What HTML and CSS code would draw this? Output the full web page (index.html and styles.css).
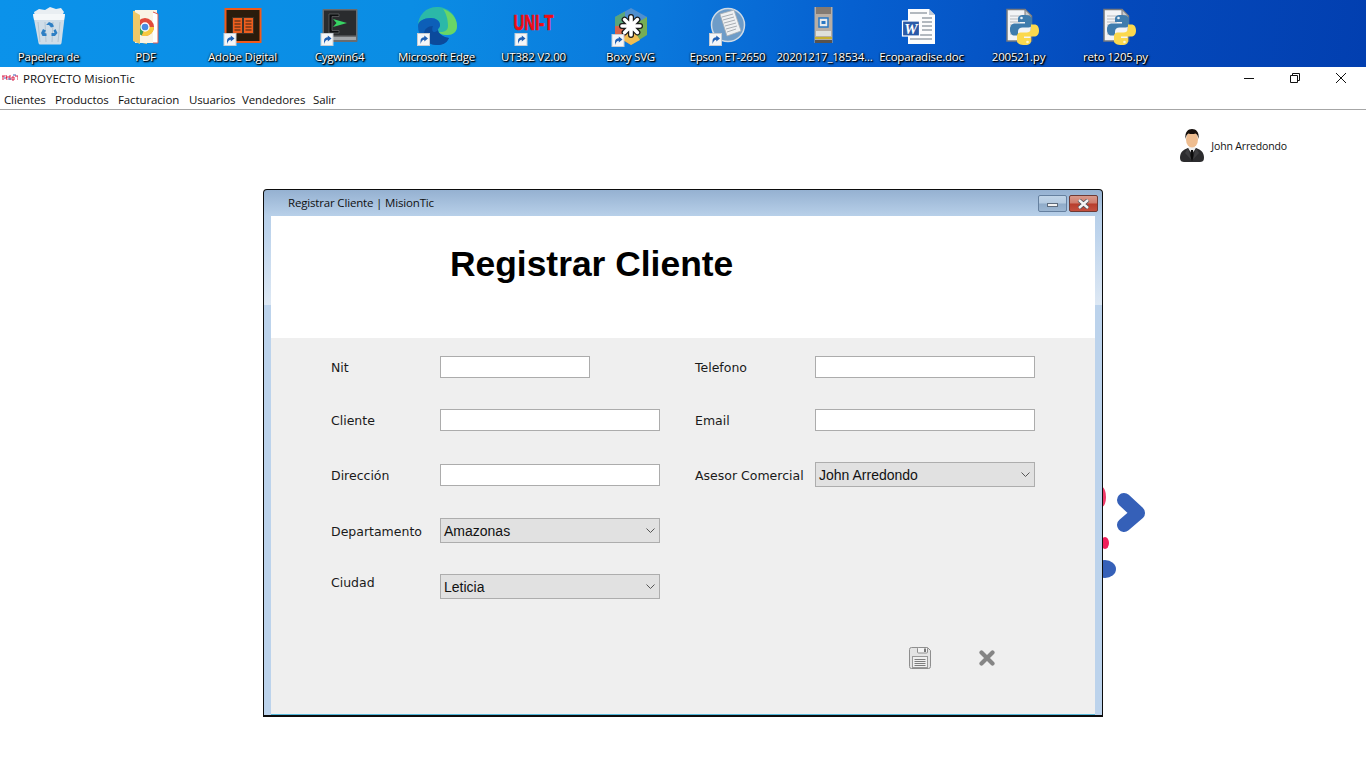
FILE: index.html
```html
<!DOCTYPE html>
<html lang="es">
<head>
<meta charset="utf-8">
<title>PROYECTO MisionTic</title>
<link rel="stylesheet" href="styles.css">
</head>
<body>
<svg class="defs" width="0" height="0" aria-hidden="true">
  <defs>
    <symbol id="shortcut" viewBox="0 0 13 13">
      <rect width="13" height="13" fill="#f4f6f8"/>
      <rect x=".5" y=".5" width="12" height="12" fill="none" stroke="#c8ccd2"/>
      <path d="M3.5 11V8c0-2.6 1.6-3.8 3.8-3.8V2.4L11 5.6 7.3 8.6V6.8C5.6 6.8 4.6 8 3.5 11z" fill="#1f5fb4"/>
    </symbol>
    <symbol id="pydoc" viewBox="0 0 48 44">
      <path d="M12 5.500H30L36.500 12V37H12z" fill="#f3f4f6" stroke="#77797d" stroke-width="1.500"/>
      <path d="M30 5.500V12H36.500z" fill="#c8cacd" stroke="#77797d"/>
      <path d="M15 12h12M15 15h12M15 18h10M15 21h7M15 24h6M15 27h6M15 30h7" stroke="#b8babd" stroke-width="1.200"/>
      <path d="M29 11c-5 0-6 2-6 4v3h7v1.500H20c-3 0-5 2-5 6s2 6 4.500 6H23v-4c0-2.500 2-4 4.500-4h6c2 0 3.500-1.500 3.500-3.500V15c0-2.500-3-4-8-4z" fill="#3f7cad"/>
      <path d="M30 41c5 0 6-2 6-4v-3h-7v-1.500h10c3 0 5-2 5-6s-2-6-4.500-6H36v4c0 2.500-2 4-4.500 4h-6c-2 0-3.500 1.500-3.500 3.500V37c0 2.500 3 4 8 4z" fill="#fbd84e"/>
      <circle cx="26.500" cy="14" r="1.300" fill="#e8f0f6"/>
      <circle cx="32.500" cy="38" r="1.300" fill="#fff7d0"/>
    </symbol>
  </defs>
</svg>

<header class="desktop">
  <div class="shortcut-item">
    <svg class="desk-icon" viewBox="0 0 48 44">
      <path d="M9 8l5-3 6 1 5-3 6 2 5-1 3 4-2 4H10z" fill="#e9eef2"/>
      <path d="M8 10h32l-3.500 29c-.3 1.200-1 1.500-2 1.500h-19c-1 0-1.700-.3-2-1.500z" fill="#cfdde8"/>
      <path d="M8 10h32l-1 6H9z" fill="#f4f7f9"/>
      <path d="M13 18l2 20M20 18l1 20M28 18l-1 20M35 18l-2 20" stroke="#b3c5d3" stroke-width="1"/>
      <path d="M21 21l3-3 3.500 1.500 1.500 3-3 1-2-2.500zM30.500 25l2 4-2.500 3h-3.500v-3h3l-1-2.500zM21.500 32h-4l-1.500-3 2-4 3 1.500-1.500 2.500 2 .5z" fill="#2e7fc4"/>
    </svg>
    <span class="desk-label">Papelera de</span>
  </div>
  <div class="shortcut-item">
    <svg class="desk-icon" viewBox="0 0 48 44">
      <path d="M11 7l14-1v34l-14-3z" fill="#f2cd72"/>
      <path d="M13 6h22v33H13z" fill="#faf4e4"/>
      <path d="M31 8l5 2v29h-5" fill="#fff" stroke="#dc5a50" stroke-width="1"/>
      <circle cx="23" cy="23" r="9" fill="#e24a3b"/>
      <path d="M23 23l9 0a9 9 0 0 1-12.300 8.400z" fill="#f7c93e"/>
      <path d="M23 23l-3.300 8.400A9 9 0 0 1 14.500 19z" fill="#3aa457"/>
      <circle cx="23" cy="23" r="4" fill="#4a8ae0" stroke="#fff" stroke-width="1.300"/>
      <path d="M11 7l7 4v29l-7-3z" fill="#f0c868"/>
    </svg>
    <span class="desk-label">PDF</span>
  </div>
  <div class="shortcut-item">
    <svg class="desk-icon" viewBox="0 0 48 44">
      <rect x="6.500" y="5" width="35" height="33" fill="#2a1c0c" stroke="#f05a1a" stroke-width="2"/>
      <rect x="13" y="13" width="22" height="17" fill="#3f3226"/>
      <path d="M14 14h9v15h-9zM25 14h9v15h-9z" fill="#ee5e1e"/>
      <path d="M15.500 17h6M15.500 20h6M15.500 23h6M15.500 26h6M26.500 17h6M26.500 20h6M26.500 23h6M26.500 26h6" stroke="#3a2412" stroke-width="1"/>
      <use href="#shortcut" x="4.500" y="29" width="13" height="13"/>
    </svg>
    <span class="desk-label">Adobe Digital</span>
  </div>
  <div class="shortcut-item">
    <svg class="desk-icon" viewBox="0 0 48 44">
      <rect x="6.500" y="5" width="35" height="33" rx="1" fill="#6a6c6e"/>
      <rect x="8" y="6.500" width="32" height="25" fill="#2a2c2e"/>
      <path d="M13 10h10v2.500h-7v14h7V29H13z" fill="#0c0e10" stroke="#686a6c" stroke-width=".7"/>
      <path d="M17 15l14 4-14 4 3.500-4z" fill="#37d463"/>
      <path d="M8 33h32v3H8z" fill="#a2a6a9"/>
      <use href="#shortcut" x="4.500" y="29" width="13" height="13"/>
    </svg>
    <span class="desk-label">Cygwin64</span>
  </div>
  <div class="shortcut-item">
    <svg class="desk-icon" viewBox="0 0 48 44">
      <path d="M5 22C5 11 13 3 24 3c11 0 20 8 20 19 0 6-4 9-10 9-5 0-9-2-9-5 0-2 2-2 2-5 0-4-4-7-9-7-7 0-13 3-13 8z" fill="#2bb8a8"/>
      <path d="M30 5c8 2 14 9 14 17 0 6-4 9-10 9-4 0-7-1-8-3 3 0 9 0 9-6 0-7-2-13-5-17z" fill="#69d666"/>
      <path d="M5 22c0-5 6-8 13-8 5 0 9 3 9 7 0 3-2 3-2 5 0 3 4 7 11 8-3 6-7 7-12 7C13 41 5 33 5 22z" fill="#0d5fb8"/>
      <path d="M25 26c0 3 4 7 11 8-3 6-7 7-12 7-7 0-13-4-13-11 0-5 4-8 9-8-2 4 0 9 5 4z" fill="#0b4a9c"/>
      <use href="#shortcut" x="4" y="29" width="13" height="13"/>
    </svg>
    <span class="desk-label">Microsoft Edge</span>
  </div>
  <div class="shortcut-item">
    <svg class="desk-icon" viewBox="0 0 48 44">
      <text class="unit-logo" transform="translate(23.500 26) scale(1 1.450)">UNI-T</text>
      <use href="#shortcut" x="4.500" y="29" width="13" height="13"/>
    </svg>
    <span class="desk-label">UT382 V2.00</span>
  </div>
  <div class="shortcut-item">
    <svg class="desk-icon" viewBox="0 0 48 44">
      <path d="M24 4l16 9v9H8v-9z" fill="#4f8fd0"/>
      <path d="M8 13l10-5.500v14.500H8z" fill="#5aa57a"/>
      <path d="M8 22v9l16 10V22z" fill="#d9644a"/>
      <path d="M40 13v18L24 41V22z" fill="#76ad55"/>
      <path d="M24 41l-8-5 8-14 9 14z" fill="#f0bd52"/>
      <g stroke="#1a1a1a" stroke-width="6" stroke-linecap="round"><path d="M24 13v18M15 22h18M17.600 15.600l12.800 12.800M30.400 15.600L17.600 28.400"/></g>
      <g stroke="#fff" stroke-width="3.600" stroke-linecap="round"><path d="M24 13v18M15 22h18M17.600 15.600l12.800 12.800M30.400 15.600L17.600 28.400"/></g>
      <use href="#shortcut" x="4.500" y="30" width="13" height="13"/>
    </svg>
    <span class="desk-label">Boxy SVG</span>
  </div>
  <div class="shortcut-item">
    <svg class="desk-icon" viewBox="0 0 48 44">
      <circle cx="24" cy="21" r="16.500" fill="#6e9cc8" stroke="#cfdbe6" stroke-width="1.500"/>
      <path d="M16 10l14-4 7 21-14 5z" fill="#eef0f2" stroke="#a8aeb4" stroke-width=".8"/>
      <path d="M18 13l11-3M19 16l11-3M20 19l11-3M21 22l11-3M22 25l11-3M23 28l9-3" stroke="#a8aeb4"/>
      <use href="#shortcut" x="5" y="29" width="13" height="13"/>
    </svg>
    <span class="desk-label">Epson ET-2650</span>
  </div>
  <div class="shortcut-item">
    <svg class="desk-icon" viewBox="0 0 48 44">
      <rect x="13.500" y="3" width="18" height="36" fill="#b8aea4"/>
      <rect x="15" y="3" width="15" height="7" fill="#837a72"/>
      <rect x="18" y="14" width="9" height="9" fill="#e8eaec" stroke="#2a78c4" stroke-width="1.500"/>
      <rect x="20.500" y="17" width="4" height="3" fill="#2a78c4"/>
      <path d="M15 27h15v5H15z" fill="#dfe0dc"/>
      <path d="M14 33h17v2H14z" fill="#c8b030"/>
      <path d="M14 36h17v3H14z" fill="#5a534d"/>
    </svg>
    <span class="desk-label">20201217_18534...</span>
  </div>
  <div class="shortcut-item">
    <svg class="desk-icon" viewBox="0 0 48 44">
      <path d="M10 5h21l6 6v29H10z" fill="#fdfdfd"/>
      <path d="M31 5v6h6z" fill="#c4ccd6"/>
      <path d="M12 9h17M24 14h10M24 18h10M24 22h10M24 26h10M12 31h22M12 35h22" stroke="#9aa2ab" stroke-width="1.500"/>
      <rect x="4.500" y="17" width="17" height="15" fill="#2a5aa8" stroke="#fff" stroke-width="1.200"/>
      <text class="word-logo" x="13" y="29.500">W</text>
    </svg>
    <span class="desk-label">Ecoparadise.doc</span>
  </div>
  <div class="shortcut-item">
    <svg class="desk-icon" viewBox="0 0 48 44"><use href="#pydoc" width="48" height="44"/></svg>
    <span class="desk-label">200521.py</span>
  </div>
  <div class="shortcut-item">
    <svg class="desk-icon" viewBox="0 0 48 44"><use href="#pydoc" width="48" height="44"/></svg>
    <span class="desk-label">reto 1205.py</span>
  </div>
</header>

<div class="app-title">
  <div class="app-name">
    <svg class="app-icon" viewBox="0 0 16 8">
      <path d="M0 2h3M1 2v4M4 1l1 5M5 3h3M8 1v5M10 3h2v3h-2zM13 2h3v4" stroke="#d81e48" stroke-width="1" fill="none"/>
      <path d="M2 4h2M6 5h3M11 1h3" stroke="#3f5fb8" stroke-width="1"/>
    </svg>
    <span>PROYECTO MisionTic</span>
  </div>
  <div class="win-controls">
    <span class="win-btn"><svg width="10" height="10" viewBox="0 0 10 10"><path d="M0 5.500h10" stroke="#111"/></svg></span>
    <span class="win-btn"><svg width="10" height="10" viewBox="0 0 10 10" fill="none" stroke="#111"><path d="M.5 2.500h7v7h-7zM2.500 2.500v-2h7v7h-2"/></svg></span>
    <span class="win-btn"><svg width="10" height="10" viewBox="0 0 10 10"><path d="M0 0l10 10M10 0L0 10" stroke="#111"/></svg></span>
  </div>
</div>

<nav class="menu">
  <span>Clientes</span><span>Productos</span><span>Facturacion</span><span>Usuarios</span><span>Vendedores</span><span>Salir</span>
</nav>

<main class="workspace">
  <div class="user">
    <svg class="avatar" viewBox="0 0 24 33">
      <path d="M0 29c0-6 3-8 8-10h8c5 2 8 4 8 10 0 3-2 4-4 4H4c-2 0-4-1-4-4z" fill="#2c2c2e"/>
      <path d="M8 19l4 6 4-6-1.500-2h-5z" fill="#f0f0f0"/>
      <path d="M11 21h2l.8 8-1.800 3-1.800-3z" fill="#0c0c0c"/>
      <path d="M8 19l3.500 12L5 24zM16 19l-3.500 12L19 24z" fill="#3e3e40"/>
      <ellipse cx="12" cy="10.500" rx="6" ry="8" fill="#eebd90"/>
      <path d="M5.500 10C4.500 3 8 0 12 0s7.500 3 6.500 10c-.5-3-1.500-5-3-5.500-2 .8-5 .8-7 0-1.500.5-2.500 2.500-3 5.500z" fill="#17100c"/>
    </svg>
    <span>John Arredondo</span>
  </div>

  <svg class="backdrop-logo" viewBox="0 0 50 100" aria-hidden="true">
    <path d="M24 20l14 13-14 12" fill="none" stroke="#3560b8" stroke-width="14" stroke-linecap="round" stroke-linejoin="round"/>
    <ellipse cx="2" cy="17" rx="4" ry="10" fill="#ee3a6a"/>
    <ellipse cx="5" cy="63" rx="4" ry="6" fill="#f01f5c"/>
    <ellipse cx="5" cy="89" rx="11" ry="9" fill="#3560b8"/>
  </svg>

  <section class="dialog">
    <div class="dialog-bar">
      <span class="dialog-title">Registrar Cliente | MisionTic</span>
      <div class="dialog-controls">
        <span class="dlg-min"><i></i></span>
        <span class="dlg-close"><svg width="15" height="10" viewBox="0 0 15 10"><path d="M3 1l9 8M12 1L3 9" stroke="#4a5058" stroke-width="4"/><path d="M3 1l9 8M12 1L3 9" stroke="#f4f4f4" stroke-width="2.400"/></svg></span>
      </div>
    </div>
    <div class="dialog-body">
      <div class="dialog-head"><h1>Registrar Cliente</h1></div>
      <div class="dialog-form">
        <form class="form-grid">
          <label class="lbl">Nit</label>
          <input class="field field-short" type="text">
          <label class="lbl lbl-right">Telefono</label>
          <input class="field" type="text">

          <label class="lbl">Cliente</label>
          <input class="field" type="text">
          <label class="lbl lbl-right">Email</label>
          <input class="field" type="text">

          <label class="lbl">Dirección</label>
          <input class="field" type="text">
          <label class="lbl lbl-right">Asesor Comercial</label>
          <div class="combo"><span>John Arredondo</span><svg width="9" height="5" viewBox="0 0 9 5"><path d="M.5.500l4 4 4-4" fill="none" stroke="#555"/></svg></div>

          <label class="lbl">Departamento</label>
          <div class="combo"><span>Amazonas</span><svg width="9" height="5" viewBox="0 0 9 5"><path d="M.5.500l4 4 4-4" fill="none" stroke="#555"/></svg></div>
          <span class="spacer"></span>

          <label class="lbl lbl-raised">Ciudad</label>
          <div class="combo"><span>Leticia</span><svg width="9" height="5" viewBox="0 0 9 5"><path d="M.5.500l4 4 4-4" fill="none" stroke="#555"/></svg></div>
        </form>
        <div class="actions">
          <svg width="22" height="22" viewBox="0 0 22 22" fill="none">
            <path d="M2.500.500h16l3 3v16a2 2 0 0 1-2 2h-17a2 2 0 0 1-2-2v-17a2 2 0 0 1 2-2z" fill="#e4e4e4" stroke="#8e8e8e"/>
            <rect x="8.500" y=".5" width="10" height="5.500" rx="1" fill="#f4f4f4" stroke="#8e8e8e"/>
            <rect x="15" y="1.500" width="2" height="3.500" fill="#777"/>
            <rect x="3.500" y="9.500" width="15" height="11" fill="#f0f0f0" stroke="#9a9a9a"/>
            <path d="M5.500 12.500h11M5.500 14.500h11M5.500 16.500h11M5.500 18.500h11" stroke="#7e7e7e"/>
          </svg>
          <svg width="16" height="16" viewBox="0 0 16 16"><path d="M2.500 2.500l11 11M13.500 2.500l-11 11" stroke="#858585" stroke-width="4.200" stroke-linecap="round"/></svg>
        </div>
      </div>
    </div>
  </section>
</main>
</body>
</html>
```

FILE: styles.css
```css
* { box-sizing: border-box; }

html, body {
  margin: 0;
  height: 100%;
  overflow: hidden;
  background: #fff;
}

body {
  width: 1366px;
  height: 768px;
  font-family: "Open Sans", "Noto Sans", sans-serif;
  color: #111;
}

.defs { position: absolute; }

/* Desktop strip */
.desktop {
  display: grid;
  grid-template-columns: repeat(12, 97px);
  height: 67px;
  overflow: hidden;
  background: linear-gradient(97deg, #0b92ea 0%, #0b8de4 30%, #0a78dc 48%, #0660d0 62%, #0449bb 82%, #023fb0 100%);
}

.shortcut-item {
  display: flex;
  flex-direction: column;
  align-items: center;
  padding-top: 4px;
  width: 97px;
}

.desk-icon {
  display: block;
  width: 48px;
  height: 44px;
  flex: none;
}

.desk-label {
  margin-top: 1px;
  font-size: 11.5px;
  line-height: 16px;
  letter-spacing: -.2px;
  white-space: nowrap;
  color: #fff;
  text-shadow: 1px 1px 1px #000, 1px 1px 2px #000, 0 0 2px #000;
}

.unit-logo {
  font: bold 15px "Liberation Sans", sans-serif;
  fill: #ee0c14;
  stroke: #ee0c14;
  stroke-width: .5px;
  text-anchor: middle;
}

.word-logo {
  font: italic bold 15px "Liberation Serif", serif;
  fill: #fff;
  text-anchor: middle;
}

/* App chrome */
.app-title {
  display: flex;
  justify-content: space-between;
  align-items: center;
  height: 22px;
  background: #fff;
}

.app-name {
  display: flex;
  align-items: center;
  padding-left: 2px;
  font-size: 11.5px;
}

.app-icon {
  width: 16px;
  height: 8px;
  margin-right: 5px;
}

.win-controls {
  display: flex;
  padding-right: 2px;
}

.win-btn {
  display: flex;
  align-items: center;
  justify-content: center;
  width: 46px;
  height: 22px;
}

.menu {
  display: grid;
  grid-template-columns: 51px 63px 71px 53px 71px auto;
  align-items: center;
  height: 21px;
  padding-left: 4px;
  font-size: 11.5px;
  letter-spacing: -.12px;
  border-bottom: 1px solid #a6a6a6;
  background: #fff;
}

/* Workspace */
.workspace {
  position: relative;
  height: 658px;
  padding-top: 19px;
}

.user {
  display: flex;
  justify-content: flex-end;
  align-items: center;
  gap: 7px;
  padding-right: 79px;
  font-size: 10.5px;
  letter-spacing: -.15px;
}

.avatar {
  width: 24px;
  height: 33px;
}

.backdrop-logo {
  position: absolute;
  left: 1100px;
  top: 370px;
  width: 50px;
  height: 100px;
  filter: blur(.7px);
}

/* Dialog window (a window over the workspace) */
.dialog {
  position: absolute;
  left: 263px;
  top: 79px;
  width: 840px;
  height: 528px;
  display: flex;
  flex-direction: column;
  border: 1px solid #0c0c0c;
  border-bottom-width: 2px;
  border-radius: 4px 4px 0 0;
  background: linear-gradient(#95b1d1 0, #b8d0e9 26px, #bcd3ec 40px, #dde8f4 115px, #bcd3ec 115px);
}

.dialog-bar {
  display: flex;
  justify-content: space-between;
  height: 26px;
  padding: 5px 4px 0 24px;
}

.dialog-title {
  font-size: 11.5px;
  line-height: 16px;
  letter-spacing: -.17px;
}

.dialog-controls {
  display: flex;
  gap: 2px;
  height: 17px;
}

.dlg-min, .dlg-close {
  display: flex;
  align-items: center;
  justify-content: center;
  width: 29px;
  border-radius: 2px;
}

.dlg-min {
  border: 1px solid #65809f;
  background: linear-gradient(#c0d4e8 0, #b4cae0 48%, #8fabc9 52%, #9cb6d2 100%);
}

.dlg-min i {
  display: block;
  width: 11px;
  height: 4px;
  margin-top: 2px;
  background: #f2f2f2;
  border: 1px solid #5d6b7c;
}

.dlg-close {
  border: 1px solid #6e3a34;
  background: linear-gradient(#d89a8c 0, #cf7a6a 48%, #b73d2c 52%, #c4503f 100%);
}

.dialog-body {
  flex: 1;
  display: flex;
  flex-direction: column;
  margin: 0 7px;
  border-bottom: 1px solid #55b8da;
}

.dialog-head {
  height: 122px;
  padding: 25px 0 0 179px;
  background: #fff;
}

h1 {
  margin: 0;
  font: bold 35.4px/46px "Liberation Sans", Arial, sans-serif;
  color: #000;
}

.dialog-form {
  flex: 1;
  padding: 18px 100px 0 60px;
  background: #efefef;
}

.form-grid {
  display: grid;
  grid-template-columns: 109px 220px 155px 220px;
  grid-template-rows: 22px 22px 25px 25px 25px;
  row-gap: 31px;
  align-items: center;
}

.lbl {
  margin-top: 2px;
  font-family: "DejaVu Sans", Verdana, sans-serif;
  font-size: 12.5px;
  line-height: 16px;
  color: #1a1a1a;
  white-space: nowrap;
}

.lbl-right {
  grid-column: 3;
  margin-left: 35px;
}

.lbl-raised {
  margin-top: 0;
  margin-bottom: 8px;
}

.spacer { grid-column: 3 / 5; }

.field {
  display: block;
  width: 220px;
  height: 22px;
  padding: 0 3px;
  border: 1px solid #acacac;
  background: #fff;
  border-radius: 0;
  outline: none;
}

.field-short { width: 150px; }

.combo {
  display: flex;
  align-items: center;
  justify-content: space-between;
  width: 220px;
  height: 25px;
  padding: 0 4px 0 3px;
  border: 1px solid #adadad;
  background: #e1e1e1;
  font: 14px "Liberation Sans", Arial, sans-serif;
  color: #111;
}

.actions {
  display: flex;
  justify-content: flex-end;
  align-items: center;
  gap: 48px;
  margin-top: 48px;
}
```
